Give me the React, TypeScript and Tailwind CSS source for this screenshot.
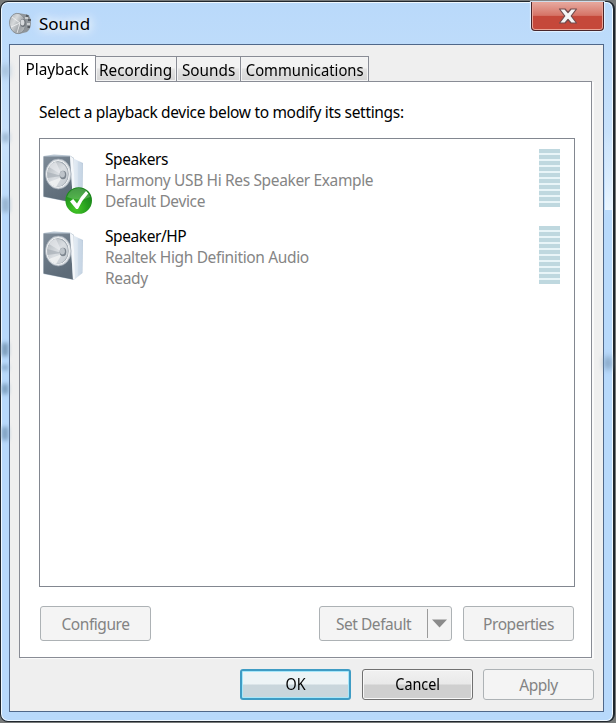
import type { ReactNode } from 'react';

function SpeakerIcon({ checked, id }: { checked?: boolean; id: string }) {
  return (
    <svg width="50" height="66" viewBox="0 0 50 66" className="block">
      <defs>
        <linearGradient id={`${id}-side`} x1="0" y1="0" x2="1" y2="0">
          <stop offset="0" stopColor="#eef3f8" />
          <stop offset="0.6" stopColor="#dce6f0" />
          <stop offset="1" stopColor="#b9c9da" />
        </linearGradient>
        <linearGradient id={`${id}-front`} x1="0" y1="0" x2="0.4" y2="1">
          <stop offset="0" stopColor="#7f8c99" />
          <stop offset="0.5" stopColor="#6a7885" />
          <stop offset="1" stopColor="#5d6b78" />
        </linearGradient>
        <linearGradient id={`${id}-cone`} x1="0" y1="0" x2="1" y2="1">
          <stop offset="0" stopColor="#aeb4ba" />
          <stop offset="0.5" stopColor="#d9dde1" />
          <stop offset="1" stopColor="#c3c9cf" />
        </linearGradient>
        <radialGradient id={`${id}-green`} cx="0.4" cy="0.8" r="0.8">
          <stop offset="0" stopColor="#45c926" />
          <stop offset="0.55" stopColor="#259c1e" />
          <stop offset="1" stopColor="#177f19" />
        </radialGradient>
      </defs>
      <path d="M25 7 L40 14 L39.500 47 L31 54 Z" fill={`url(#${id}-side)`} />
      <path d="M35 13 L39.500 15 L39 46 L35 50 Z" fill="#c9d9e8" opacity="0.6" />
      <path d="M0.500 7 L11 5.500 L27 6.500 L31 9 L31 54 L0.500 48 Z" fill="#b9c6d2" />
      <path d="M0.500 7.500 L27 7.500 L30 53.500 L0.500 47.500 Z" fill={`url(#${id}-front)`} />
      <path d="M27 7 L30.500 9.500 L32 53 L30 53.500 Z" fill="#f4f7fa" />
      <ellipse cx="15.300" cy="25" rx="12.800" ry="15" fill="#d8dde2" stroke="#a2abb4" strokeWidth="0.7" />
      <ellipse cx="15" cy="25" rx="11.300" ry="13.400" fill="#a4acb4" stroke="#f3f5f6" strokeWidth="1" />
      <ellipse cx="14.500" cy="25.300" rx="10.300" ry="12.400" fill={`url(#${id}-cone)`} />
      <path d="M19 26 L6 18 Q9 13 13 13 Z" fill="#edeff1" opacity="0.6" />
      <path d="M19 28 L6 33 Q9 37 13 38 Z" fill="#f4f5f6" opacity="0.75" />
      <path d="M19 27 L4.300 23 L4.500 29 Z" fill="#a5acb3" opacity="0.65" />
      <ellipse cx="20" cy="26" rx="3.300" ry="4.200" fill="#7c858e" />
      <ellipse cx="19.400" cy="25.200" rx="2.500" ry="3.300" fill="#bec4ca" />
      {checked && (
        <g>
          <circle cx="35.700" cy="51.500" r="13.300" fill={`url(#${id}-green)`} />
          <path d="M24 48 A12 12 0 0 1 47.300 48 Q36 53 24 48" fill="#ffffff" opacity="0.2" />
          <path d="M27 52.500 L30.200 50 L34 54.500 Q38 47 43 42 L45.300 44.500 Q39 51 35 60 L33.200 60 Z" fill="#ffffff" />
        </g>
      )}
    </svg>
  );
}

function TitleSpeakerIcon() {
  return (
    <svg width="23" height="23" viewBox="0 0 23 23">
      <defs>
        <linearGradient id="title-cone" x1="0" y1="0" x2="1" y2="1">
          <stop offset="0" stopColor="#a4a9ad" />
          <stop offset="0.35" stopColor="#d6d9db" />
          <stop offset="0.65" stopColor="#9ca1a5" />
          <stop offset="1" stopColor="#c6cacd" />
        </linearGradient>
      </defs>
      <path d="M9 1 L18 2.500 Q22 4 22 11 Q22 17 18 20 L10 22 Z" fill="#8f959a" />
      <path d="M17 3.500 L19.500 4.500 M19 8 L22 8 M18.500 15 L21 15" stroke="#555b61" strokeWidth="2" />
      <path d="M16 6 L19 6 M18 12 L21 12" stroke="#dfe2e4" strokeWidth="1.500" />
      <ellipse cx="8.500" cy="11.500" rx="8" ry="10.200" fill="url(#title-cone)" stroke="#83898e" strokeWidth="0.8" transform="rotate(-8 8.500 11.500)" />
      <path d="M11 11 L3 5 M11 11 L2 15 M11 11 L8 21" stroke="#f7f8f9" opacity="0.75" />
      <ellipse cx="14" cy="11" rx="2.700" ry="4" fill="#70767c" />
      <ellipse cx="13.500" cy="10.500" rx="1.900" ry="3" fill="#d7dadd" />
    </svg>
  );
}

function Meter() {
  return (
    <div className="flex w-[21px] flex-col gap-[2px] self-start bg-[#e9f5f8]">
      {Array.from({ length: 10 }, (_, i) => (
        <div key={i} className="h-[4px] bg-[#bfd8df]" />
      ))}
    </div>
  );
}

function Device({ name, driver, status, checked, id }: { name: string; driver: string; status: string; checked?: boolean; id: string }) {
  return (
    <div className="flex h-[77px] pr-[14px] pl-[3px]">
      <div className="w-[62px] shrink-0">
        <SpeakerIcon id={id} checked={checked} />
      </div>
      <div className="grow text-[15.500px] leading-[21px] whitespace-nowrap text-[#858585]">
        <div className="tracking-[-0.420px] text-black">{name}</div>
        <div className="tracking-[-0.360px]">{driver}</div>
        <div className="tracking-[-0.360px]">{status}</div>
      </div>
      <Meter />
    </div>
  );
}

function Tab({ children, className }: { children: ReactNode; className: string }) {
  return (
    <div className={`flex h-[25px] items-center justify-center border border-b-0 border-l-0 border-[#898c95] bg-linear-to-b from-[#f2f2f2] from-45% via-[#e3e3e3] via-50% to-[#d5d5d5] pt-px text-[17px] whitespace-nowrap shadow-[inset_0_0_0_1px_#f4f4f4] ${className}`}>
      {children}
    </div>
  );
}

function DisabledButton({ children, className }: { children: ReactNode; className: string }) {
  return (
    <button className={`flex shrink-0 items-center justify-center rounded-[3px] border border-[#adb2b5] bg-[#f4f4f4] pt-[2px] text-[15.500px] tracking-[-0.450px] text-[#838383] ${className}`}>
      {children}
    </button>
  );
}

export default function App() {
  return (
    <div className="h-[723px] w-[616px] overflow-hidden bg-[#777a7a] pt-px font-['Noto_Sans','Open_Sans',sans-serif] text-black">
      <div className="relative flex h-[721px] w-[615px] flex-col rounded-[8px] border border-r-2 border-[#20272e] bg-linear-to-b from-[#b9d9fa] via-[#c9e2fb] via-20% to-[#b8d9fb] to-30% px-[8px] pb-[9px] shadow-[inset_0_0_0_1px_#eff8ff]">
        <div className="absolute top-[196px] left-[1px] h-[14px] w-[7px] bg-[#96b3ce] blur-[2px]" />
        <div className="absolute top-[63px] left-[1px] h-[12px] w-[7px] bg-[#a1bcd5] blur-[3px]" />
        <div className="absolute top-[131px] left-[1px] h-[9px] w-[7px] bg-[#9fbad4] blur-[2px]" />
        <div className="absolute top-[341px] left-[1px] h-[13px] w-[6px] bg-[#7696b4] blur-[2px]" />
        <div className="absolute top-[363px] left-[1px] h-[5px] w-[6px] bg-[#82a4c4] blur-[2px]" />
        <div className="absolute top-[382px] left-[1px] h-[10px] w-[6px] bg-[#789aba] blur-[2px]" />
        <div className="absolute top-[425px] left-[1px] h-[13px] w-[6px] bg-[#7c9dbd] blur-[2px]" />
        <div className="absolute top-[355px] right-[2px] h-[12px] w-[6px] bg-[#7797b5] blur-[3px]" />
        {/* Lit upper part of the right-hand glass frame */}
        <div className="absolute top-[130px] right-[1px] h-[78px] w-[7px] bg-linear-to-b from-transparent to-[#eaf5ff]" />

        <header className="flex h-[42px] shrink-0 items-start justify-between">
          <div className="flex items-center pt-[8px]">
            <TitleSpeakerIcon />
            <span className="ml-[7px] pt-[2px] text-[17px] leading-[24px] [text-shadow:0_0_8px_white,0_0_12px_white,0_0_16px_white]">Sound</span>
          </div>
          <button aria-label="Close" className="mr-px flex h-[29px] w-[73px] items-center justify-center rounded-b-[4px] border border-t-0 border-[#49252a] bg-linear-to-b from-[#e6aaa0] from-0% via-[#d57366] via-48% to-[#c5483a] to-50% shadow-[inset_0_0_0_1px_#e9a497,0_0_1px_1px_#e3f1ff]">
            <svg width="20" height="18" viewBox="0 0 20 18">
              <path d="M1.500 2 H7 L10 5.500 L13 2 H18.500 L13.200 9 L18.500 16 H13 L10 12.500 L7 16 H1.500 L6.800 9 Z" fill="#f5f5f5" stroke="#704b4c" strokeWidth="1.200" strokeLinejoin="round" />
            </svg>
          </button>
        </header>

        <main className="flex h-[668px] w-[595px] shrink-0 flex-col border border-[#50688a] bg-[#efefef] px-[9px] pt-[10px]">
          <nav className="flex h-[26px] shrink-0 items-end">
            <div className="z-10 flex h-[27px] w-[77px] shrink-0 items-start justify-center self-start border border-b-0 border-[#898c95] bg-white text-[17px] leading-[25px]">
              <span className="scale-x-90">Playback</span>
            </div>
            <Tab className="w-[81px]"><span className="scale-x-90">Recording</span></Tab>
            <Tab className="w-[64px]"><span className="scale-x-90">Sounds</span></Tab>
            <Tab className="w-[128px]"><span className="scale-x-[0.870]">Communications</span></Tab>
          </nav>

          <section className="flex h-[577px] w-[573px] shrink-0 flex-col border border-[#898c95] bg-white px-[19px] shadow-[2px_1px_0_#fafafa]">
            <p className="h-[56px] pt-[19px] text-[15.500px] leading-[22px] whitespace-nowrap tracking-[-0.325px]">
              Select a playback device below to modify its settings:
            </p>
            <div className="h-[449px] w-[536px] shrink-0 border border-[#828790] bg-white pt-[10px]">
              <Device id="usb" name="Speakers" driver="Harmony USB Hi Res Speaker Example" status="Default Device" checked />
              <Device id="hd" name="Speaker/HP" driver="Realtek High Definition Audio" status="Ready" />
            </div>
            <div className="flex pt-[19px] pl-px">
              <DisabledButton className="h-[35px] w-[111px]">Configure</DisabledButton>
              <DisabledButton className="ml-[168px] h-[35px] w-[133px]">
                <span className="w-[107px] text-center">Set Default</span>
                <span className="mt-[-2px] h-[29px] w-px bg-[#9b9b9b]" />
                <span className="mt-[-2px] flex w-[23px] justify-center">
                  <svg width="15" height="9" viewBox="0 0 15 9"><path d="M0 0.500 H15 L7.500 8.500 Z" fill="#8b8b8b" /></svg>
                </span>
              </DisabledButton>
              <DisabledButton className="ml-[11px] h-[35px] w-[111px]">Properties</DisabledButton>
            </div>
          </section>

          <footer className="flex justify-end pt-[11px]">
            <button className="flex h-[31px] w-[111px] items-center justify-center rounded-[3px] border-2 border-[#3f9cc4] bg-linear-to-b from-[#edf4f6] from-48% to-[#c9d6dc] to-52% text-[16.500px] shadow-[inset_0_0_0_1px_#a6e7fa]">
              <span className="scale-x-[0.870]">OK</span>
            </button>
            <button className="ml-[11px] flex h-[31px] w-[111px] items-center justify-center rounded-[3px] border border-[#707070] bg-linear-to-b from-[#f1f1f1] from-0% via-[#e9e9e9] via-48% to-[#cfcfcf] to-52% text-[16.500px] shadow-[inset_0_0_0_1px_#f8f8f8]">
              <span className="scale-x-[0.870]">Cancel</span>
            </button>
            <DisabledButton className="ml-[10px] h-[31px] w-[111px]">Apply</DisabledButton>
          </footer>
        </main>
      </div>
    </div>
  );
}
